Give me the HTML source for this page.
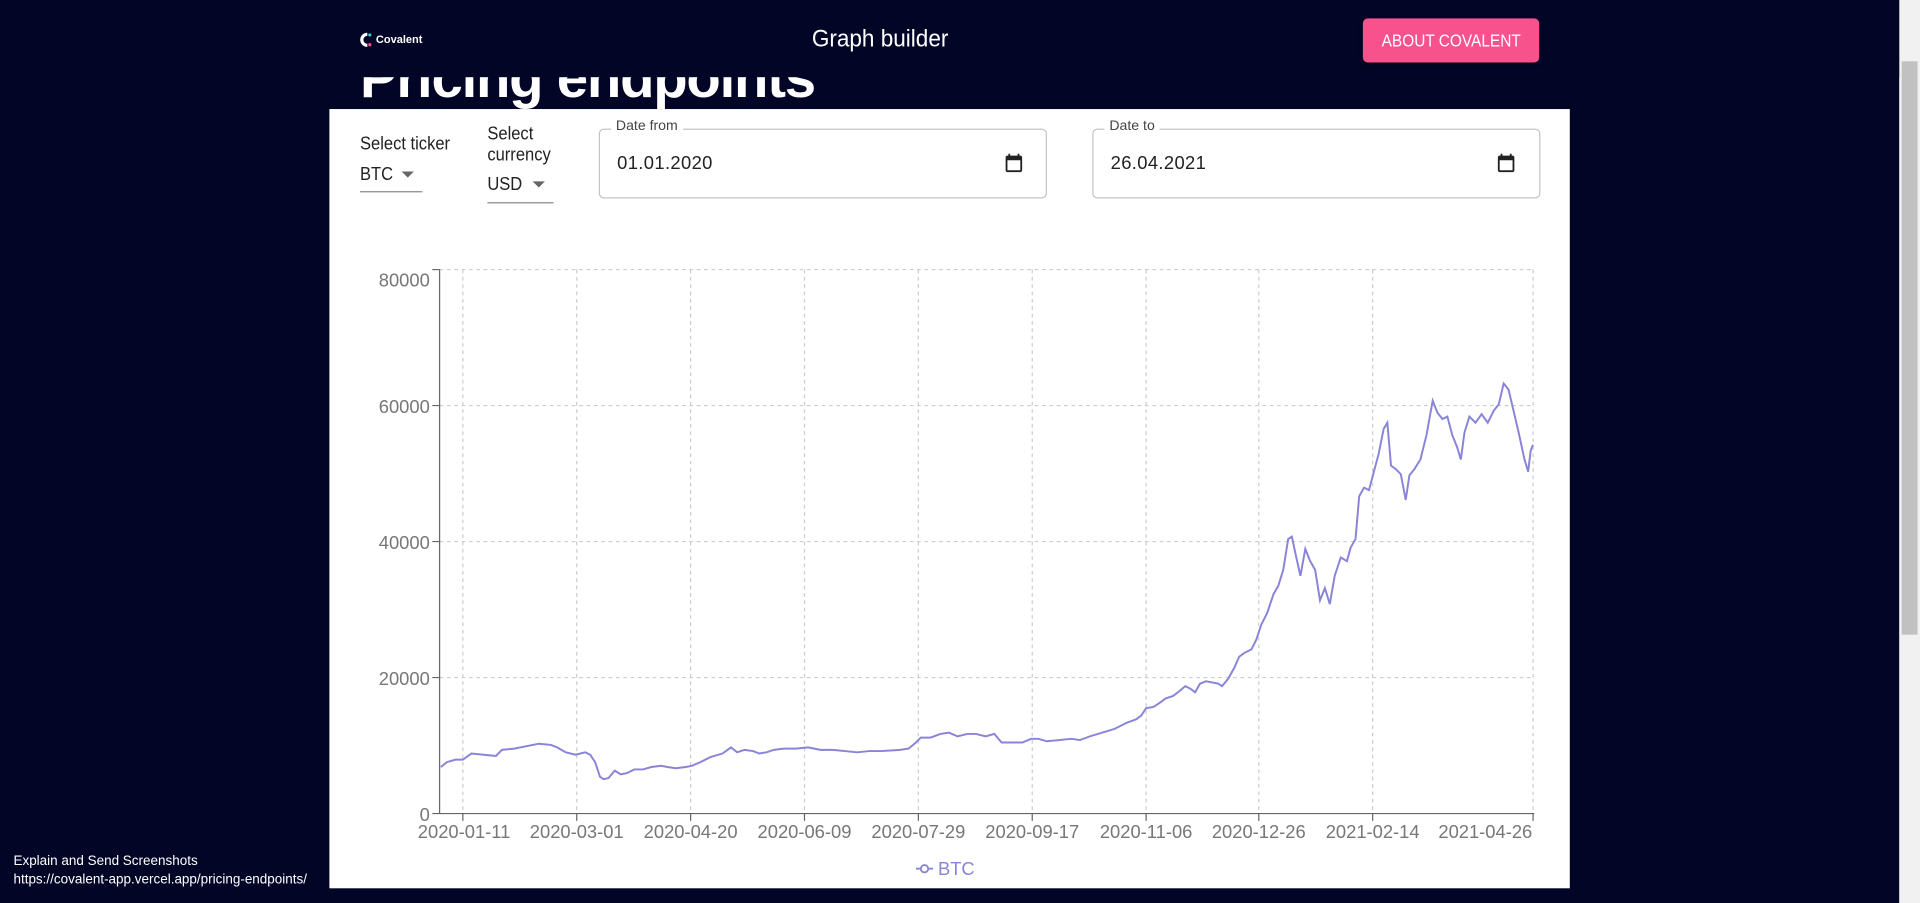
<!DOCTYPE html>
<html><head><meta charset="utf-8"><style>
html,body{margin:0;padding:0;width:1920px;height:903px;overflow:hidden;background:#020526;}
#w{position:absolute;left:0;top:0;width:1568px;height:737px;transform:scale(1.22449,1.22524);transform-origin:0 0;font-family:"Liberation Sans",sans-serif;}
.abs{position:absolute;}
#sb{left:1551px;top:0;width:17px;height:737px;background:#f1f1f1;}
#th{left:1553px;top:50px;width:13px;height:468px;background:#c1c1c1;}
#hdr{left:0;top:0;width:1551px;height:63px;background:#020526;z-index:3;}
h1{position:absolute;left:294px;top:36px;margin:0;font-size:46px;font-weight:bold;color:#fff;letter-spacing:-1px;transform:scaleX(1.0);transform-origin:0 0;}
#panel{left:269px;top:89px;width:1013px;height:636px;background:#fff;}
.lbl{font-size:15px;color:#222;transform:scaleX(0.9);transform-origin:0 0;}
.fld{border:1px solid #c4c4c4;border-radius:4px;}
.fl{font-size:11.5px;color:#444;background:#fff;padding:0 4px;}
.val{font-size:15px;color:#222;letter-spacing:0.3px;}
.ax{font-size:15px;fill:#777;font-family:"Liberation Sans",sans-serif;}
</style></head><body><div id="w">
<div id="sb" class="abs"></div><div id="th" class="abs"></div>
<h1>Pricing endpoints</h1>
<div id="hdr" class="abs">
 <svg class="abs" style="left:293px;top:26px" width="12" height="13" viewBox="0 0 12 13"><path d="M7 2 A4.5 4.5 0 1 0 7 11" fill="none" stroke="#fff" stroke-width="2.6"/><circle cx="9" cy="2.5" r="1.3" fill="#3cc"/><circle cx="9" cy="10.5" r="1.3" fill="#f5508a"/></svg>
 <div class="abs" style="left:307px;top:27px;font-size:9px;font-weight:bold;color:#fff">Covalent</div>
 <div class="abs" style="left:663px;top:21px;font-size:20px;color:#fff;transform:scaleX(0.92);transform-origin:0 0">Graph builder</div>
 <div class="abs" style="left:1113px;top:15px;width:144px;height:36px;background:#f7528c;border-radius:4px;box-shadow:0 2px 3px rgba(0,0,0,.4);color:#fff;font-size:14px;line-height:36px;text-align:center"><span style="display:inline-block;transform:scaleX(0.9)">ABOUT COVALENT</span></div>
</div>
<div id="panel" class="abs"></div>
<div class="abs lbl" style="left:294px;top:109px">Select ticker</div>
<div class="abs lbl" style="left:294px;top:134px">BTC</div>
<div class="abs" style="left:328px;top:140px;border:5px solid transparent;border-top-color:#666;border-bottom:0"></div>
<div class="abs" style="left:294px;top:156px;width:51px;height:1px;background:#888"></div>
<div class="abs lbl" style="left:398px;top:101px;line-height:17px">Select<br>currency</div>
<div class="abs lbl" style="left:398px;top:142px">USD</div>
<div class="abs" style="left:435px;top:148px;border:5px solid transparent;border-top-color:#666;border-bottom:0"></div>
<div class="abs" style="left:398px;top:165px;width:54px;height:1px;background:#888"></div>
<div class="abs fld" style="left:489px;top:105px;width:364px;height:55px"></div>
<div class="abs fl" style="left:499px;top:97px">Date from</div>
<div class="abs val" style="left:504px;top:125px">01.01.2020</div>
<svg class="abs" style="left:819px;top:124px" width="18" height="18" viewBox="0 0 24 24"><path fill="#222" d="M19 4h-1V2h-2v2H8V2H6v2H5c-1.1 0-2 .9-2 2v14c0 1.1.9 2 2 2h14c1.1 0 2-.9 2-2V6c0-1.1-.9-2-2-2zm0 16H5V9h14v11z"/></svg>
<div class="abs fld" style="left:892px;top:105px;width:364px;height:55px"></div>
<div class="abs fl" style="left:902px;top:97px">Date to</div>
<div class="abs val" style="left:907px;top:125px">26.04.2021</div>
<svg class="abs" style="left:1221px;top:124px" width="18" height="18" viewBox="0 0 24 24"><path fill="#222" d="M19 4h-1V2h-2v2H8V2H6v2H5c-1.1 0-2 .9-2 2v14c0 1.1.9 2 2 2h14c1.1 0 2-.9 2-2V6c0-1.1-.9-2-2-2zm0 16H5V9h14v11z"/></svg>
<svg class="abs" style="left:0;top:0" width="1568" height="737">
<g stroke="#ccc" stroke-dasharray="3 3" fill="none">
<path d="M359 220H1252M359 331H1252M359 442H1252M359 553H1252"/>
<path d="M378 220V664M471 220V664M564 220V664M657 220V664M750 220V664M843 220V664M936 220V664M1028 220V664M1121 220V664M1252 220V664"/>
</g>
<g stroke="#666" fill="none"><path d="M359 220V664H1253"/><path d="M353 220H359M353 331H359M353 442H359M353 553H359M353 664H359M378 664V670M471 664V670M564 664V670M657 664V670M750 664V670M843 664V670M936 664V670M1028 664V670M1121 664V670M1252 664V670"/></g>
<g class="ax" text-anchor="end"><text x="351" y="234">80000</text><text x="351" y="337">60000</text><text x="351" y="448">40000</text><text x="351" y="559">20000</text><text x="351" y="670">0</text></g>
<g class="ax" text-anchor="middle"><text x="379" y="684">2020-01-11</text><text x="471" y="684">2020-03-01</text><text x="564" y="684">2020-04-20</text><text x="657" y="684">2020-06-09</text><text x="750" y="684">2020-07-29</text><text x="843" y="684">2020-09-17</text><text x="936" y="684">2020-11-06</text><text x="1028" y="684">2020-12-26</text><text x="1121" y="684">2021-02-14</text><text x="1213" y="684">2021-04-26</text></g>
<polyline fill="none" stroke="#8884d8" stroke-width="1.6" points="360,626 365,622 372,620 378,620 385,615 395,616 405,617 410,612 420,611 430,609 440,607 450,608 455,610 462,614 470,616 478,614 482,616 486,622 490,634 493,636 497,635 502,629 507,632 512,631 518,628 525,628 532,626 540,625 545,626 552,627 560,626 565,625 572,622 580,618 590,615 597,610 602,614 608,612 615,613 620,615 626,614 632,612 640,611 650,611 660,610 670,612 680,612 690,613 700,614 710,613 720,613 735,612 742,611 748,606 752,602 760,602 768,599 775,598 782,601 790,599 797,599 805,601 812,599 818,606 825,606 835,606 842,603 848,603 855,605 865,604 875,603 882,604 890,601 900,598 910,595 920,590 928,587 932,584 936,578 942,577 948,573 952,570 958,568 962,565 968,560 972,562 976,565 980,558 985,556 990,557 995,558 998,560 1003,554 1008,545 1012,536 1016,533 1022,530 1026,522 1030,510 1035,500 1040,485 1044,478 1048,465 1052,440 1055,438 1058,452 1062,470 1066,448 1070,458 1074,465 1078,490 1082,480 1086,493 1090,470 1095,455 1100,458 1103,447 1107,440 1110,405 1114,398 1118,400 1122,385 1126,370 1130,350 1133,345 1136,380 1140,383 1144,387 1148,408 1151,388 1155,383 1160,375 1165,355 1170,327 1174,337 1178,342 1182,340 1186,355 1190,365 1193,375 1196,353 1200,340 1205,345 1210,338 1215,345 1220,335 1224,330 1228,313 1232,318 1236,335 1240,352 1245,375 1248,385 1250,368 1252,363"/>
<path d="M748 709H762" stroke="#8884d8" stroke-width="1.6"/><circle cx="755" cy="709" r="3" fill="#fff" stroke="#8884d8" stroke-width="1.5"/>
<text x="766" y="714" font-size="15" fill="#8884d8" font-family="Liberation Sans,sans-serif">BTC</text>
</svg>
<div class="abs" style="left:11px;top:696px;font-size:11px;color:#fff;font-family:Arial,'Liberation Sans',sans-serif;line-height:15px">Explain and Send Screenshots<br>https://covalent-app.vercel.app/pricing-endpoints/</div>
</div></body></html>
